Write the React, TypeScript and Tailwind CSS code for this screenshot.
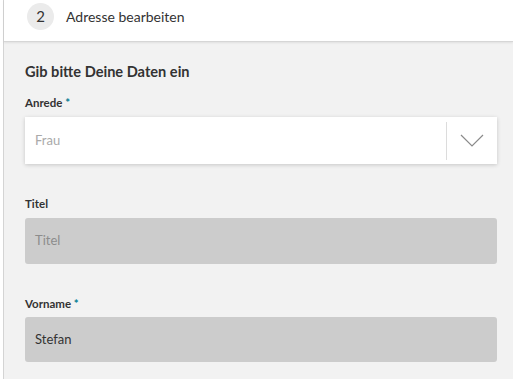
export default function App() {
  return (
    <div className="w-[513px] h-[379px] overflow-hidden bg-white pl-[3px] font-['Lato',sans-serif]">
      <div className="h-full border-l border-[#d4d4d4] bg-[#f2f2f2]">
        {/* Header */}
        <header className="h-[42px] bg-white border-b border-[#d6d6d6] shadow-[0_1px_2px_rgba(0,0,0,0.08)] flex items-center pl-[23px] pb-[8px]">
          <div className="w-[27px] h-[27px] rounded-full bg-[#ebebeb] flex items-center justify-center text-[15px] text-[#333]">
            2
          </div>
          <span className="ml-[12px] text-[14px] text-[#333]">Adresse bearbeiten</span>
        </header>

        {/* Form */}
        <main className="pl-[21px] pr-[16px] pt-[20px]">
          <h2 className="text-[14.6px] font-bold text-[#333] leading-[20px]">Gib bitte Deine Daten ein</h2>

          <label className="block mt-[14px] text-[11.5px] font-bold text-[#333] leading-[14px]">
            Anrede <span className="text-[#007c92]">*</span>
          </label>
          <div className="mt-[7px] h-[47px] bg-white shadow-[0_1px_4px_rgba(0,0,0,0.18)] flex items-center">
            <span className="flex-1 pl-[10px] text-[13px] text-[#aaa]">Frau</span>
            <div className="w-px h-[38px] bg-[#dcdcdc]" />
            <div className="w-[50px] flex items-center justify-center">
              <svg width="24" height="14" viewBox="0 0 24 14" fill="none">
                <path d="M1 1 L12 12 L23 1" stroke="#8a8a8a" strokeWidth="1.2" />
              </svg>
            </div>
          </div>

          <label className="block mt-[33px] text-[11.5px] font-bold text-[#333] leading-[14px]">Titel</label>
          <div className="mt-[7px] h-[46px] rounded-[3px] bg-[#cccccc] flex items-center pl-[10px] text-[13px] text-[#8c8c8c]">
            Titel
          </div>

          <label className="block mt-[33px] text-[11.5px] font-bold text-[#333] leading-[14px]">
            Vorname <span className="text-[#007c92]">*</span>
          </label>
          <div className="mt-[6px] h-[45px] rounded-[3px] bg-[#cccccc] flex items-center pl-[10px] text-[13px] text-[#333]">
            Stefan
          </div>
        </main>
      </div>
    </div>
  );
}
